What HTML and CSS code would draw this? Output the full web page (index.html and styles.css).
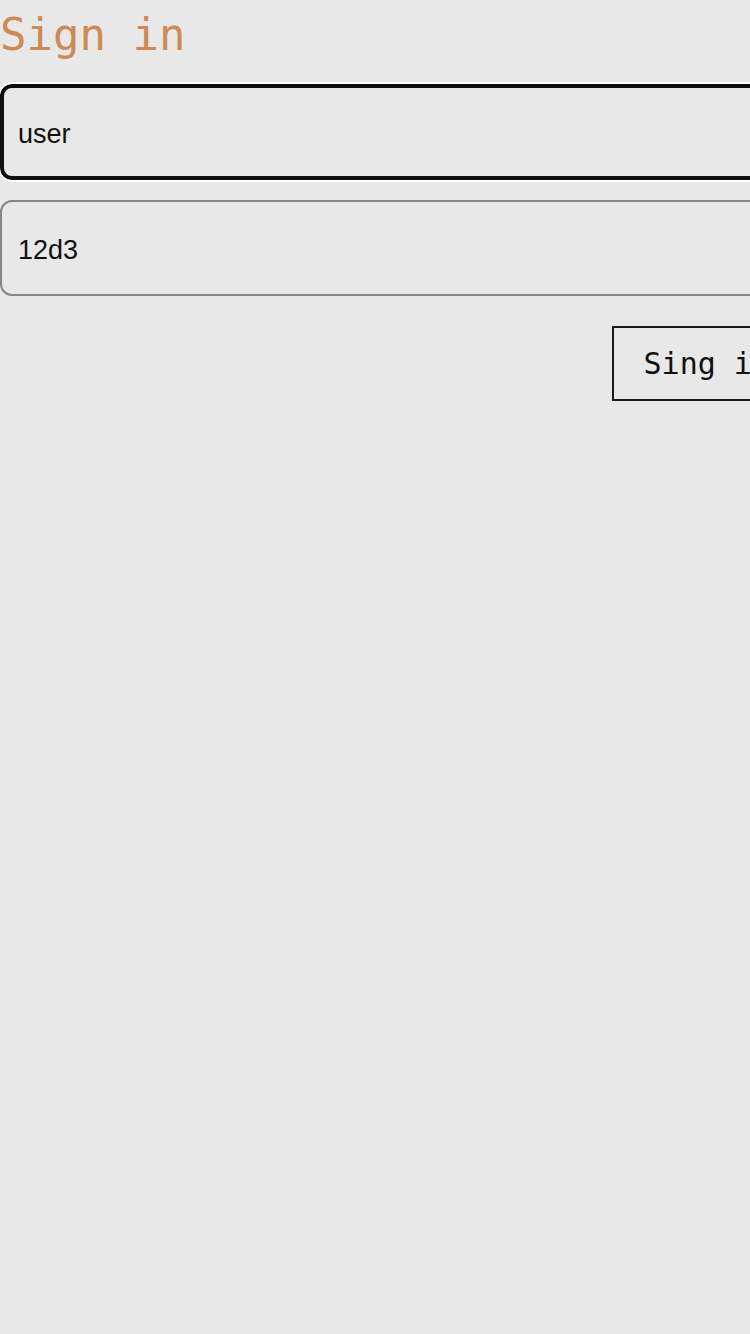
FILE: index.html
```html
<!DOCTYPE html>
<html lang="en">
<head>
<meta charset="utf-8">
<title>Sign in</title>
<link rel="stylesheet" href="styles.css">
</head>
<body>
<main class="page">
  <h1 class="title">Sign in</h1>
  <form class="form">
    <input class="field field-focused" type="text" value="user">
    <input class="field" type="text" value="12d3">
    <button class="submit" type="button">Sing in</button>
  </form>
</main>
</body>
</html>
```

FILE: styles.css
```css
html, body {
  margin: 0;
  padding: 0;
  background: #e8e8e8;
  overflow: hidden;
}

.page {
  width: 802px;
  display: flex;
  flex-direction: column;
}

.title {
  margin: 9px 0 0 0;
  font-family: "DejaVu Sans Mono", monospace;
  font-weight: normal;
  font-size: 44px;
  line-height: 51px;
  color: #cd8a52;
}

.form {
  display: flex;
  flex-direction: column;
  margin-top: 24px;
}

.field {
  box-sizing: border-box;
  width: 100%;
  height: 96px;
  margin: 0;
  padding: 4px 16px 0 16px;
  border: 2px solid #858585;
  border-radius: 12px;
  background: #e8e8e8;
  font-family: "Liberation Sans", Arial, sans-serif;
  font-size: 27px;
  color: #111;
  outline: none;
}

.field + .field {
  margin-top: 20px;
}

.field-focused {
  border: 4px solid #101010;
  padding: 4px 14px 0 14px;
  outline: 2px solid #ffffff;
  outline-offset: 0;
}

.submit {
  align-self: flex-end;
  margin-top: 30px;
  padding: 18px 30px;
  border: 2px solid #1a1a1a;
  border-radius: 0;
  background: transparent;
  font-family: "DejaVu Sans Mono", monospace;
  font-size: 30px;
  line-height: 35px;
  color: #111;
}
```
